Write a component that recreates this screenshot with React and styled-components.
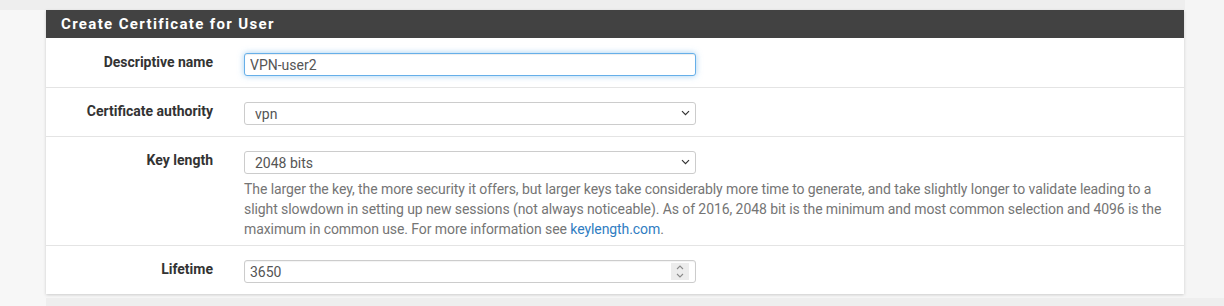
import React from "react";
import styled, { createGlobalStyle } from "styled-components";

const GlobalStyle = createGlobalStyle`
  html, body {
    margin: 0;
    padding: 0;
    background: #f5f5f5;
    font-family: Roboto, "Liberation Sans", sans-serif;
  }
`;

const Band = styled.div`
  width: 1185px;
  height: ${(p) => p.$height}px;
  background: #eeeeee;
  margin-top: ${(p) => p.$gap || 0}px;
`;

const Main = styled.main`
  width: 1185px;
  box-sizing: border-box;
  padding-left: 46px;
  background: #f7f7f7;
`;

const Panel = styled.section`
  width: 1138px;
  background: #fff;
  box-shadow: 0 1px 3px rgba(0, 0, 0, 0.18);
`;

const PanelHeading = styled.h2`
  margin: 0;
  height: 28px;
  line-height: 28px;
  padding-left: 15px;
  background: #424242;
  color: #fff;
  font-size: 15px;
  font-weight: 700;
  letter-spacing: 1.35px;
`;

const Row = styled.div`
  display: flex;
  gap: 31px;
  padding: ${(p) => (p.$first ? "15px" : "14px")} 0 11px;
  border-top: ${(p) => (p.$first ? "none" : "1px solid #e4e4e4")};
`;

const Label = styled.label`
  width: 167px;
  flex: none;
  text-align: right;
  font-size: 14px;
  line-height: 18px;
  font-weight: 700;
  color: #333;
`;

const Field = styled.div`
  flex: 1;
  padding-right: 2px;
`;

const Control = styled.div`
  position: relative;
  width: 452px;
  height: 23px;
`;

const controlBase = `
  box-sizing: border-box;
  width: 100%;
  height: 100%;
  border: 1px solid #cccccc;
  border-radius: 3px;
  background: #fff;
  font-family: Roboto, "Liberation Sans", sans-serif;
  font-size: 14px;
  color: #555;
  outline: none;
  display: block;
  margin: 0;
`;

const TextInput = styled.input`
  ${controlBase}
  padding: 0 5px;
  appearance: textfield;
  border-color: ${(p) => (p.$focus ? "#66afe9" : "#cccccc")};
  box-shadow: ${(p) =>
    p.$focus
      ? "inset 0 1px 1px rgba(0,0,0,.075), 0 0 6px rgba(102,175,233,.6)"
      : "inset 0 1px 1px rgba(0,0,0,.05)"};

  &::-webkit-inner-spin-button,
  &::-webkit-outer-spin-button {
    -webkit-appearance: none;
    margin: 0;
  }
`;

const Select = styled.select`
  ${controlBase}
  appearance: none;
  padding: 0 24px 0 10px;
`;

const Chevron = styled.svg`
  position: absolute;
  right: 6px;
  top: 8px;
  width: 9px;
  height: 6px;
  pointer-events: none;
`;

const Spinner = styled.div`
  position: absolute;
  right: 7px;
  top: 3px;
  width: 18px;
  height: 17px;
  background: #ececec;
  display: flex;
  flex-direction: column;
  align-items: center;
  justify-content: center;
  gap: 3px;
  pointer-events: none;
`;

const HelpText = styled.p`
  margin: 5px 0 -5px;
  font-size: 14px;
  line-height: 20px;
  letter-spacing: -0.08px;
  color: #757575;
`;

const Link = styled.a`
  color: #2f7dc2;
  text-decoration: none;
`;

const Arrow = ({ up, color = "#444" }) => (
  <svg width="8" height="5" viewBox="0 0 8 5">
    <path
      d={up ? "M1 4 L4 1 L7 4" : "M1 1 L4 4 L7 1"}
      fill="none"
      stroke={color}
      strokeWidth="1.1"
    />
  </svg>
);

const SelectBox = ({ value, children }) => (
  <Control>
    <Select defaultValue={value}>{children}</Select>
    <Chevron viewBox="0 0 9 6">
      <path d="M1 1.2 L4.5 4.7 L8 1.2" fill="none" stroke="#333" strokeWidth="1.2" />
    </Chevron>
  </Control>
);

export default function App() {
  return (
    <>
      <GlobalStyle />
      <Band $height={10} />
      <Main>
        <Panel>
          <PanelHeading>Create Certificate for User</PanelHeading>
          <Row $first>
            <Label>Descriptive name</Label>
            <Field>
              <Control>
                <TextInput $focus defaultValue="VPN-user2" />
              </Control>
            </Field>
          </Row>
          <Row>
            <Label>Certificate authority</Label>
            <Field>
              <SelectBox value="vpn">
                <option value="vpn">vpn</option>
              </SelectBox>
            </Field>
          </Row>
          <Row>
            <Label>Key length</Label>
            <Field>
              <SelectBox value="2048">
                <option value="1024">1024 bits</option>
                <option value="2048">2048 bits</option>
                <option value="4096">4096 bits</option>
              </SelectBox>
              <HelpText>
                The larger the key, the more security it offers, but larger keys take
                considerably more time to generate, and take slightly longer to validate
                leading to a slight slowdown in setting up new sessions (not always
                noticeable). As of 2016, 2048 bit is the minimum and most common selection
                and 4096 is the maximum in common use. For more information see{" "}
                <Link href="#">keylength.com</Link>.
              </HelpText>
            </Field>
          </Row>
          <Row>
            <Label>Lifetime</Label>
            <Field>
              <Control>
                <TextInput type="number" defaultValue="3650" />
                <Spinner>
                  <Arrow up color="#8a8a8a" />
                  <Arrow color="#8a8a8a" />
                </Spinner>
              </Control>
            </Field>
          </Row>
        </Panel>
        <Band $height={8} $gap={4} />
      </Main>
    </>
  );
}
